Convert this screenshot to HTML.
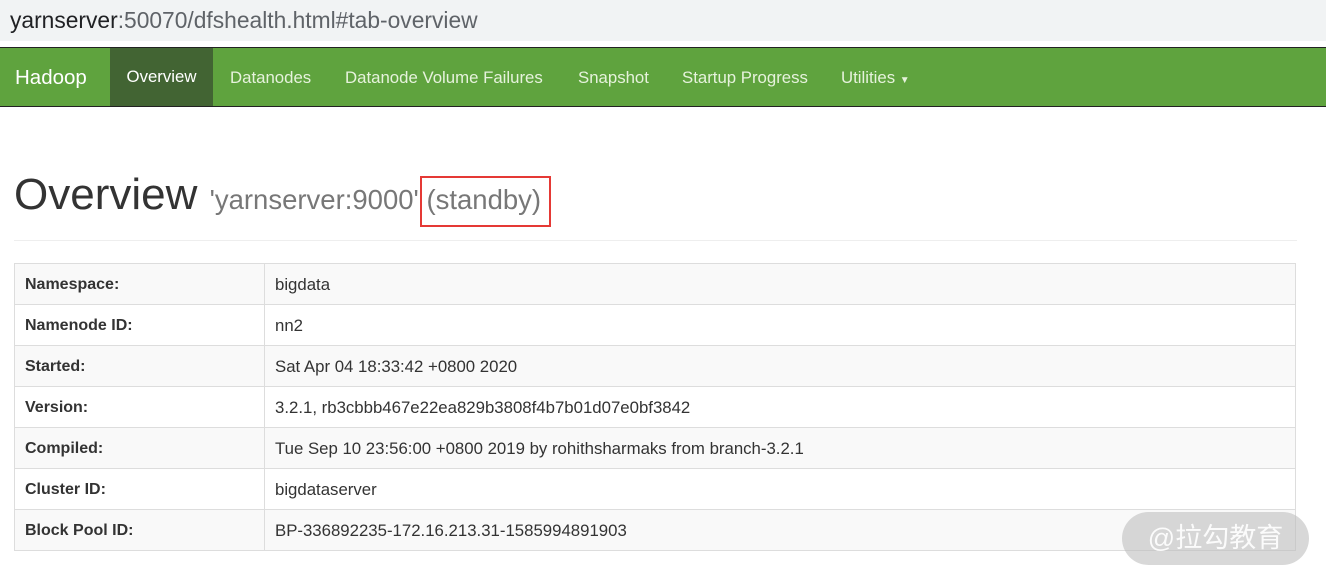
<!DOCTYPE html>
<html><head><meta charset="utf-8"><style>
body{margin:0;width:1326px;height:582px;overflow:hidden;background:#fff;font-family:"Liberation Sans",sans-serif;position:relative}
.addr{height:41px;background:#f1f3f4;font-size:22.8px;line-height:41px;padding-left:10px;color:#5f6368}
.addr b{font-weight:normal;color:#202124}
.nav{position:absolute;top:47px;left:0;width:1326px;height:58px;background:#5fa33e;border-top:1px solid #222;border-bottom:1px solid #222}
.nav span{position:absolute;top:1px;line-height:58px;font-size:16.8px;color:#e6f2dc}
.brand{font-size:20.5px!important;color:#fff!important}
.act{background:#426433;color:#fff!important;text-align:center;top:0!important;height:58px}
h1{position:absolute;left:14px;top:170px;margin:0;font-weight:normal;font-size:44px;color:#333}
h1 small{font-size:27.5px;color:#777}
.red{position:absolute;left:420px;top:176px;width:127px;height:47px;border:2px solid #e53935}
.hr{position:absolute;left:14px;top:240px;width:1283px;border-top:1px solid #eee}
table{position:absolute;left:14px;top:263px;width:1282px;border-collapse:collapse;font-size:16.8px;color:#333}
td{border:1px solid #ddd;height:39px;padding:1px 10px 0;line-height:20px}
td:first-child{width:229px;font-weight:bold;font-size:16px}
tr:nth-child(odd){background:#f9f9f9}
.wm{position:absolute;left:1122px;top:512px;width:187px;height:53px;border-radius:27px;background:rgba(190,190,190,.6);color:rgba(255,255,255,.9);font-size:27px;line-height:53px;text-align:center;font-family:"Liberation Sans","Noto Sans CJK SC",sans-serif}
</style></head><body>
<div class="addr"><b>yarnserver</b>:50070/dfshealth.html#tab-overview</div>
<div class="nav">
<span class="brand" style="left:15px">Hadoop</span>
<span class="act" style="left:110px;width:103px">Overview</span>
<span style="left:230px">Datanodes</span>
<span style="left:345px">Datanode Volume Failures</span>
<span style="left:578px">Snapshot</span>
<span style="left:682px">Startup Progress</span>
<span style="left:841px">Utilities <small style="font-size:10px">▼</small></span>
</div>
<h1>Overview <small>'yarnserver:9000' (standby)</small></h1>
<div class="red"></div>
<div class="hr"></div>
<table>
<tr><td>Namespace:</td><td>bigdata</td></tr>
<tr><td>Namenode ID:</td><td>nn2</td></tr>
<tr><td>Started:</td><td>Sat Apr 04 18:33:42 +0800 2020</td></tr>
<tr><td>Version:</td><td>3.2.1, rb3cbbb467e22ea829b3808f4b7b01d07e0bf3842</td></tr>
<tr><td>Compiled:</td><td>Tue Sep 10 23:56:00 +0800 2019 by rohithsharmaks from branch-3.2.1</td></tr>
<tr><td>Cluster ID:</td><td>bigdataserver</td></tr>
<tr><td>Block Pool ID:</td><td>BP-336892235-172.16.213.31-1585994891903</td></tr>
</table>
<div class="wm">@拉勾教育</div>
</body></html>
